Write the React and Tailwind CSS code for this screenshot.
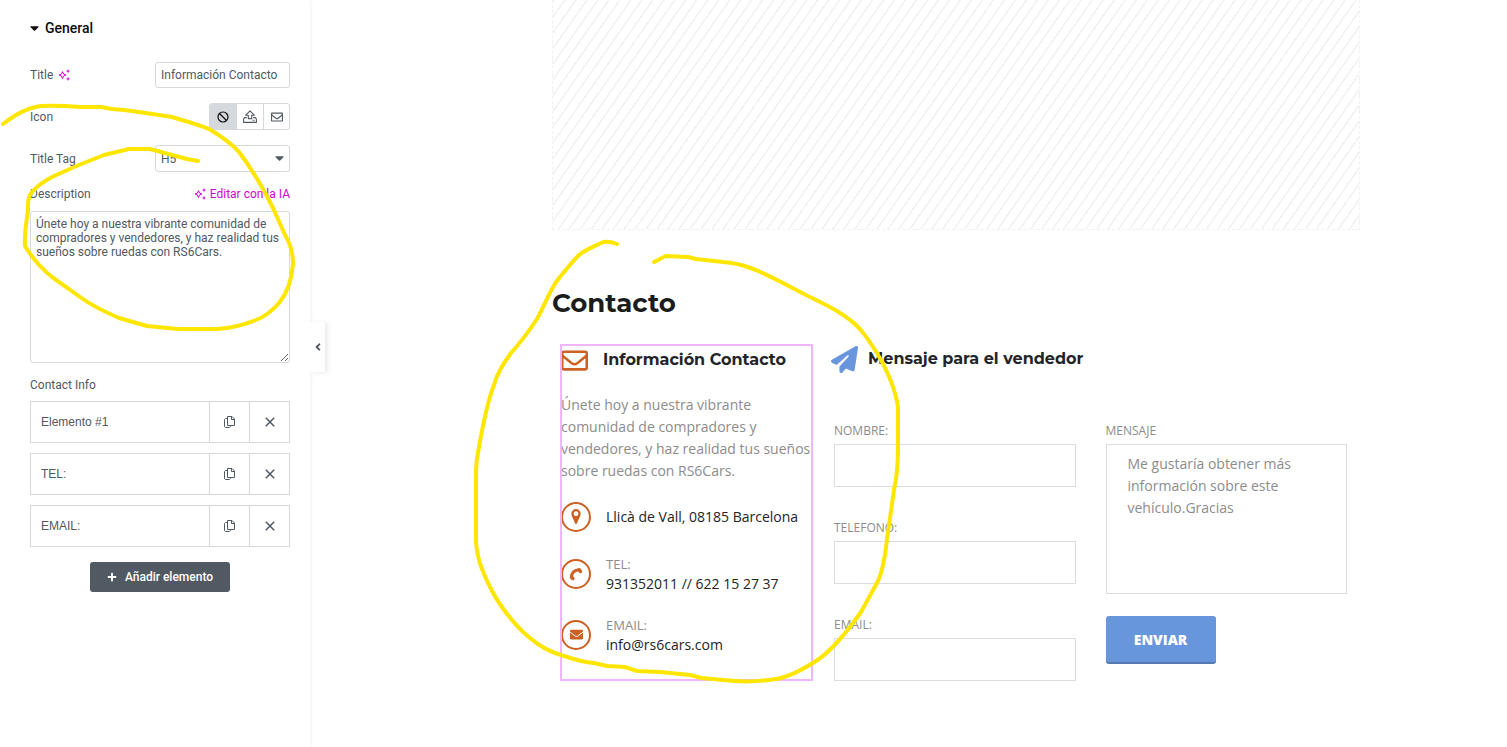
import { useState } from "react"
import { FaRegEnvelope, FaEnvelope, FaPlus, FaCaretDown, FaAngleLeft } from "react-icons/fa"
import { FaPaperPlane } from "react-icons/fa6"

const DESCRIPTION = "Únete hoy a nuestra vibrante comunidad de compradores y vendedores, y haz realidad tus sueños sobre ruedas con RS6Cars."

const ITEMS = ["Elemento #1", "TEL:", "EMAIL:"]

function SparkleIcon() {
  return (
    <svg viewBox="0 0 12 12" className="w-3 h-3 shrink-0" fill="none" stroke="currentColor" aria-hidden="true">
      <path d="M4.5 2.6 5.5 5 8 6 5.5 7 4.5 9.6 3.4 7 1 6 3.4 5Z" strokeLinejoin="round" />
      <path d="M10 .6v3M8.5 2.1h3M10 8.4v3M8.5 9.9h3" />
    </svg>
  )
}

function BanIcon() {
  return (
    <svg viewBox="0 0 12 12" className="w-3 h-3" fill="none" stroke="currentColor" strokeWidth="1.2" aria-hidden="true">
      <circle cx="6" cy="6" r="5" />
      <path d="m2.5 2.5 7 7" />
    </svg>
  )
}

function UploadIcon() {
  return (
    <svg viewBox="0 0 14 13" className="w-3.5 h-[13px]" fill="none" stroke="currentColor" strokeWidth="1.1" strokeLinejoin="round" aria-hidden="true">
      <path d="M5.3 8.6V5.3H2.6L7 .8l4.400 4.500H8.700v3.300Z" />
      <path d="M3.800 7.600H1.600L.6 9v3.400h12.800V9l-1-1.400h-2.200M9.500 10.300h2" />
    </svg>
  )
}

function CopyIcon() {
  return (
    <svg viewBox="0 0 11 12" className="w-[11px] h-3" fill="none" stroke="currentColor" strokeLinejoin="round" aria-hidden="true">
      <path d="M3.500.5h4.500l2.500 2.500v6.500h-7Z" />
      <path d="M7.500.5v3h3M3.500 2.500h-2l-1 1v7l1 1h4l1-1v-1" />
    </svg>
  )
}

function CloseIcon() {
  return (
    <svg viewBox="0 0 10 10" className="w-2.5 h-2.5" fill="none" stroke="currentColor" strokeWidth="1.5" aria-hidden="true">
      <path d="m.8.8 8.400 8.400M9.200.8.8 9.200" />
    </svg>
  )
}

function PinIcon() {
  return (
    <svg viewBox="0 0 10 15" className="w-2.5 h-[15px]" fill="currentColor" aria-hidden="true">
      <path fillRule="evenodd" d="M5 0a4.700 4.700 0 0 1 4.700 4.700C9.700 7.500 7.400 9.500 6.400 13.600 6.200 14.400 5.700 15 5 15s-1.200-.6-1.400-1.400C2.600 9.500.3 7.500.3 4.700A4.700 4.700 0 0 1 5 0Zm0 2.300a2.400 2.400 0 1 0 0 4.800 2.400 2.400 0 0 0 0-4.800Z" />
    </svg>
  )
}

function PhoneIcon() {
  return (
    <svg viewBox="0 0 14 14" className="w-3.5 h-3.5" fill="none" stroke="currentColor" strokeLinecap="round" aria-hidden="true">
      <path d="M2.500 10C2.500 6 5.500 2.800 10 2.700" strokeWidth="3" />
      <path d="m10.200 2.900 1.200 1.400M2.600 10.200l1.200 1.200" strokeWidth="3.600" />
    </svg>
  )
}

function MailIcon() {
  return <FaEnvelope className="w-[13px] h-[13px]" />
}

const CONTACTS = [
  { Icon: PinIcon, value: "Llicà de Vall, 08185 Barcelona", row: "h-[29px]" },
  { Icon: PhoneIcon, label: "TEL:", value: "931352011 // 622 15 27 37", row: "h-[37px]" },
  { Icon: MailIcon, label: "EMAIL:", value: "info@rs6cars.com", row: "h-[37px]" },
]

function Sidebar() {
  const [title, setTitle] = useState("Información Contacto")
  const [text, setText] = useState(DESCRIPTION)

  return (
    <aside className="relative w-[310px] shrink-0 px-5 pl-[30px] font-[Roboto,sans-serif] text-xs text-[#515962] shadow-[0_0_4px_rgba(0,0,0,0.1)]">
      <h2 className="flex items-center gap-1.5 h-14 text-sm font-medium text-[#0c0d0e]">
        <FaCaretDown className="w-[9px] h-3.5" />
        General
      </h2>

      <div className="flex items-center justify-between mt-1.5 h-[26px]">
        <div className="flex items-center gap-[5px]">
          <label htmlFor="title">Title</label>
          <span className="text-[#d004d4]"><SparkleIcon /></span>
        </div>
        <input
          id="title"
          value={title}
          onChange={e => setTitle(e.target.value)}
          className="w-[135px] h-[26px] px-[5px] border border-[#d5d8dc] rounded-[3px] outline-none"
        />
      </div>

      <div className="flex items-center justify-between mt-[15px] h-[27px]">
        <span>Icon</span>
        <div className="flex h-[27px] border border-[#d5d8dc] rounded-[3px] overflow-hidden">
          <button aria-label="Ninguno" className="flex items-center justify-center w-[26px] bg-[#d5d8dc] text-[#0c0d0e]"><BanIcon /></button>
          <button aria-label="Subir SVG" className="flex items-center justify-center w-[27px] border-l border-[#d5d8dc]"><UploadIcon /></button>
          <button aria-label="Biblioteca de iconos" className="flex items-center justify-center w-[26px] border-l border-[#d5d8dc]"><FaRegEnvelope className="w-3 h-3" /></button>
        </div>
      </div>

      <div className="flex items-center justify-between mt-[15px] h-[27px]">
        <label htmlFor="tag">Title Tag</label>
        <div className="relative">
          <select id="tag" defaultValue="H5" className="block w-[135px] h-[27px] px-[5px] border border-[#d5d8dc] rounded-[3px] appearance-none outline-none">
            {["H1", "H2", "H3", "H4", "H5", "H6"].map(t => <option key={t}>{t}</option>)}
          </select>
          <FaCaretDown className="absolute right-1.5 top-1.5 w-[9px] h-3.5 pointer-events-none" />
        </div>
      </div>

      <div className="flex items-center justify-between mt-3.5 h-4">
        <label htmlFor="description">Description</label>
        <button className="flex items-center gap-1 text-[#d004d4]">
          <SparkleIcon />
          Editar con la IA
        </button>
      </div>
      <textarea
        id="description"
        value={text}
        onChange={e => setText(e.target.value)}
        className="block mt-[9px] w-full h-[152px] p-[5px] leading-[14px] border border-[#d5d8dc] rounded-[3px] outline-none resize-y"
      />

      <div className="mt-3.5 leading-4">Contact Info</div>
      <div className="flex flex-col gap-2.5 mt-2">
        {ITEMS.map(item => (
          <div key={item} className="flex h-[42px] border border-[#d5d8dc]">
            <button className="flex-1 pl-2.5 text-left font-[Liberation_Sans,sans-serif]">{item}</button>
            <button aria-label="Duplicar" className="flex items-center justify-center w-10 border-l border-[#d5d8dc]"><CopyIcon /></button>
            <button aria-label="Eliminar" className="flex items-center justify-center w-10 border-l border-[#d5d8dc]"><CloseIcon /></button>
          </div>
        ))}
      </div>
      <button className="flex items-center justify-center gap-2 mt-[15px] mx-auto w-[140px] h-[30px] rounded-[3px] bg-[#515962] text-white font-medium">
        <FaPlus className="w-2.5 h-2.5" />
        Añadir elemento
      </button>

      <button
        aria-label="Ocultar panel"
        className="absolute left-full top-[322px] flex items-center justify-center w-[15px] h-[50px] bg-white shadow-[3px_1px_5px_rgba(0,0,0,0.08)]"
      >
        <FaAngleLeft className="w-3 h-3" />
      </button>
    </aside>
  )
}

function ContactInfo() {
  return (
    <section className="w-[251px] h-[335px] shrink-0 outline-2 -outline-offset-1 outline-[#f0b5fb]">
      <div className="flex items-center gap-[15px] h-[30px]">
        <FaRegEnvelope className="w-[27px] h-[27px] text-[#cc6123]" />
        <h3 className="font-[Montserrat,Inter,sans-serif] text-base font-bold">Información Contacto</h3>
      </div>
      <p className="mt-[19px] leading-[22px] text-sm text-[#8c8c8c]">{DESCRIPTION}</p>
      <ul className="flex flex-col mt-5 gap-6">
        {CONTACTS.map(({ Icon, label, value, row }) => (
          <li key={value} className={`flex items-center gap-[15px] ${row}`}>
            <span className="flex items-center justify-center w-[30px] h-[30px] rounded-full border-2 border-[#cc6123] text-[#cc6123]">
              <Icon />
            </span>
            <div className="text-sm leading-[19px]">
              {label && <div className="text-[13px] leading-[19px] text-[#8c8c8c]">{label}</div>}
              <div>{value}</div>
            </div>
          </li>
        ))}
      </ul>
    </section>
  )
}

function Field({ id, label }) {
  return (
    <div>
      <label htmlFor={id} className="block leading-[27px] text-xs text-[#8c8c8c]">{label}</label>
      <input id={id} className="block w-full h-[43px] px-5 border border-[#dcdcdc] outline-none" />
    </div>
  )
}

function MessageForm() {
  return (
    <form className="flex-1 min-w-0 pr-[13px]" onSubmit={e => e.preventDefault()}>
      <div className="flex items-center gap-2.5 h-7">
        <FaPaperPlane className="w-[27px] h-[27px] text-[#6896dc]" />
        <h3 className="font-[Montserrat,Inter,sans-serif] text-base font-bold">Mensaje para el vendedor</h3>
      </div>
      <div className="grid grid-cols-2 gap-[30px] mt-11 pl-[3px]">
        <div className="flex flex-col gap-[27px]">
          <Field id="nombre" label="NOMBRE:" />
          <Field id="telefono" label="TELEFONO:" />
          <Field id="email" label="EMAIL:" />
        </div>
        <div>
          <label htmlFor="mensaje" className="block leading-[27px] text-xs text-[#8c8c8c]">MENSAJE</label>
          <textarea
            id="mensaje"
            defaultValue="Me gustaría obtener más información sobre este vehículo.Gracias"
            className="block w-full h-[150px] px-[21px] py-2 leading-[22px] text-sm text-[#8c8c8c] border border-[#dcdcdc] outline-none resize-none"
          />
          <button className="mt-[22px] w-[110px] h-12 pt-0.5 rounded-[3px] border-b-2 border-[#5479b3] bg-[#6896dc] text-white text-sm font-extrabold">ENVIAR</button>
        </div>
      </div>
    </form>
  )
}

// Freehand marker strokes laid over the page
function Marker() {
  return (
    <svg className="absolute left-0 top-0 w-[1507px] h-[747px] pointer-events-none" viewBox="0 0 1507 747" fill="none" stroke="#ffe600" strokeWidth="4" strokeLinecap="round" strokeLinejoin="round" aria-hidden="true">
      <path d="M3 124C15 115 26 108 41 106C55 105 68 106 81 107L101 107L112 109L124 110C140 112 158 115 172 117C189 122 199 125 209 129C221 136 231 143 239 152C252 169 263 188 273 208L285 235C290 243 293 252 293 264C292 278 288 292 279 303C272 311 264 317 256 320C243 325 231 328 218 329L178 329L147 326L119 318C105 312 91 305 80 297L52 277C42 269 34 261 25 246C24 235 26 224 28 211C28 202 28 196 32 192C38 185 46 180 54 176C69 169 88 161 104 155L129 149L150 149L172 155L187 159L198 161" />
      <path d="M617 244C609 241 605 241 601 243C593 247 585 250 579 255C570 264 563 273 556 282C549 293 544 306 537 319C529 331 521 342 511 353C504 363 497 373 494 385C486 405 482 430 478 453C476 461 476 470 476 478L476 541C477 560 483 573 492 591C501 608 512 621 523 632C533 641 544 650 561 655C573 659 581 662 594 663L607 666L625 667L637 671L660 672L690 675L702 678L723 680C740 682 758 682 776 679C789 677 804 669 819 659C834 648 847 632 861 612L878 581C883 570 885 558 887 539L894 490C898 472 898 460 898 448L898 407C895 387 887 370 877 353C868 339 860 327 850 320C837 309 822 303 806 295L781 282C760 271 742 263 723 262L696 259L688 257L666 256C661 258 657 261 654 262" />
    </svg>
  )
}

export default function App() {
  return (
    <div className="relative flex min-h-screen overflow-hidden bg-white">
      <Sidebar />
      <main className="flex-1 min-w-0 pl-[242px] pr-[147px] font-[Open_Sans,sans-serif] text-[#222427]">
        <div className="h-[230px] border border-t-0 border-dashed border-[#f2f2f2] bg-[repeating-linear-gradient(125deg,#f1f1f1_0px,#f1f1f1_1px,transparent_2px,transparent_9px)]" />
        <h1 className="mt-[53px] leading-10 font-[Montserrat,Inter,sans-serif] text-[26px] font-bold text-[#1c1c1c]">Contacto</h1>
        <div className="flex items-start gap-[19px] mt-[22px] pl-[9px]">
          <ContactInfo />
          <MessageForm />
        </div>
      </main>
      <Marker />
    </div>
  )
}
